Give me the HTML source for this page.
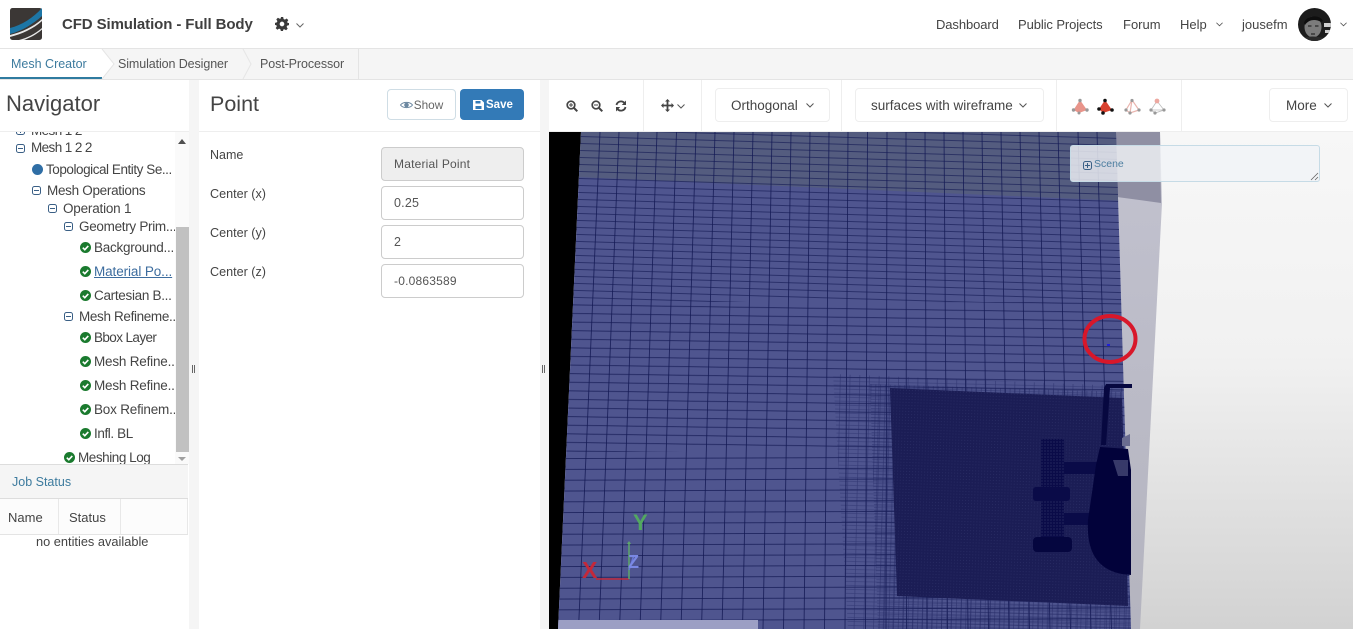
<!DOCTYPE html>
<html><head><meta charset="utf-8"><title>CFD Simulation - Full Body</title>
<style>
html,body{margin:0;padding:0;width:1353px;height:629px;overflow:hidden;background:#f5f5f5;font-family:"Liberation Sans",sans-serif;color:#444}
.a{position:absolute}
.t{position:absolute;white-space:nowrap;line-height:20px;font-size:13.5px;color:#444}
.box{position:absolute;background:#fff;box-sizing:border-box}
.inp{position:absolute;left:381px;width:143px;height:34px;box-sizing:border-box;border:1px solid #ccc;border-radius:4px;background:#fff;font-size:12px;color:#555;line-height:32px;padding-left:12px;letter-spacing:.2px}
.btn{position:absolute;box-sizing:border-box;border:1px solid #e6e6e6;border-radius:4px;background:#fff;height:34px;top:88px;font-size:13.5px;color:#444;line-height:32px;text-align:center}
.sep{position:absolute;top:80px;width:1px;height:52px;background:#eee}
svg{position:absolute;display:block;overflow:visible}
</style></head><body>

<!-- top bar -->
<div class="box" style="left:0;top:0;width:1353px;height:49px;border-bottom:1px solid #e4e4e4"></div>
<svg style="left:10px;top:8px" width="32" height="32" viewBox="0 0 32 32">
<rect width="32" height="32" rx="2.500" fill="#3b3735"/>
<path d="M0 20C12 17 23 10 32 0V8C23 16 12 23 0 26Z" fill="#1d76a6"/>
<path d="M0 27C12 24 23 19 32 11V13C23 21 12 26 0 29Z" fill="#e8e8e8"/>
<path d="M9 32C17 30 25 26 32 20V21.500C26 27 19 30 14 32Z" fill="#e8e8e8"/>
</svg>
<div class="t" style="left:62px;top:15px;font-size:15px;font-weight:bold;color:#3f3f3f;letter-spacing:-.1px">CFD Simulation - Full Body</div>
<svg style="left:275px;top:17px" width="14" height="14" viewBox="0 0 24 24"><path fill="#3a3a3a" fill-rule="evenodd" d="M10 0h4l.7 3.400 2.300 1 3-1.900 2.800 2.800-1.900 3 1 2.300L24 10v4l-3.100.7-1 2.300 1.900 3-2.800 2.800-3-1.900-2.300 1L14 24h-4l-.7-3.100-2.300-1-3 1.900-2.800-2.800 1.900-3-1-2.300L0 14v-4l3.100-.7 1-2.300-1.900-3L5 1.200l3 1.900 2.300-1zM12 8a4 4 0 1 0 0 8 4 4 0 0 0 0-8z"/></svg>
<svg style="left:296px;top:23px" width="8" height="5" viewBox="0 0 8 5"><path d="M.5.500L4 4 7.500.5" fill="none" stroke="#666"/></svg>

<div class="t" style="left:936px;top:15px;font-size:13px;letter-spacing:-.1px">Dashboard</div>
<div class="t" style="left:1018px;top:15px;font-size:13px;letter-spacing:-.1px">Public Projects</div>
<div class="t" style="left:1123px;top:15px;font-size:13px">Forum</div>
<div class="t" style="left:1180px;top:15px;font-size:13px">Help</div>
<svg style="left:1216px;top:22px" width="7" height="5" viewBox="0 0 8 5"><path d="M.5.500L4 4 7.500.5" fill="none" stroke="#555"/></svg>
<div class="t" style="left:1242px;top:15px;font-size:13px">jousefm</div>
<svg style="left:1298px;top:8px" width="33" height="33" viewBox="0 0 33 33">
<defs><clipPath id="av"><circle cx="16.500" cy="16.500" r="16.500"/></clipPath></defs>
<g clip-path="url(#av)"><rect width="33" height="33" fill="#1c1c1c"/>
<ellipse cx="15" cy="19" rx="8.500" ry="10.500" fill="#7c7c7c"/>
<path d="M6 15C8 7 22 6 25 13L23 14C18 11 11 11 7 17Z" fill="#0e0e0e"/>
<path d="M26 15h7v4h-7zM27 22h6v3h-6z" fill="#cfcfcf"/>
<path d="M5 30c5-2 14-2 20 0v3H5z" fill="#2a2a2a"/>
<path d="M10 18h3.500M17 18h3.500M13 26h4" stroke="#2a2a2a" stroke-width="1.300"/></g></svg>
<svg style="left:1340px;top:22px" width="7" height="5" viewBox="0 0 8 5"><path d="M.5.500L4 4 7.500.5" fill="none" stroke="#555"/></svg>

<!-- tabs -->
<div class="a" style="left:0;top:49px;width:1353px;height:30px;background:#f5f5f5;border-bottom:1px solid #e4e4e4"></div>
<div class="a" style="left:0;top:49px;width:102px;height:30px;background:#fff"></div>
<div class="a" style="left:0;top:77px;width:102px;height:2px;background:#2f7ba0"></div>
<svg style="left:102px;top:49px" width="260" height="30" viewBox="0 0 260 30">
<path d="M0 0L12 15 0 30" fill="#fff" stroke="#e4e4e4"/>
<path d="M141 0l8 15-8 15" fill="none" stroke="#e6e6e6"/>
<path d="M256.500 0v30" stroke="#e4e4e4"/></svg>
<div class="t" style="left:11px;top:54px;font-size:12.500px;color:#3d7b9e">Mesh Creator</div>
<div class="t" style="left:118px;top:54px;font-size:12.500px;color:#555;letter-spacing:-.1px">Simulation Designer</div>
<div class="t" style="left:260px;top:54px;font-size:12.500px;color:#555;letter-spacing:-.1px">Post-Processor</div>

<!-- navigator -->
<div class="box" style="left:0;top:80px;width:189px;height:549px"></div>
<div class="a" style="left:0;top:131px;width:189px;height:1px;background:#eee"></div>
<div class="t" style="left:6px;top:92px;font-size:22px;line-height:24px;color:#444">Navigator</div>

<div class="a" style="left:0;top:132px;width:175px;height:332px;overflow:hidden">
<div class="t" style="left:31px;top:-11px;letter-spacing:-.6px">Mesh 1 2</div>
<svg style="left:16px;top:-6px" width="9" height="9"><rect x=".5" y=".5" width="8" height="8" rx="2" fill="none" stroke="#3a5f85"/><path d="M2 4.500h5M4.500 2v5" stroke="#3a5f85"/></svg>
<div class="t" style="left:31px;top:6px;letter-spacing:-.6px">Mesh 1 2 2</div>
<div class="t" style="left:46px;top:28px;letter-spacing:-.45px">Topological Entity Se...</div>
<div class="a" style="left:32px;top:32px;width:11px;height:11px;border-radius:50%;background:#2f6ea5"></div>
<div class="t" style="left:47px;top:49px;letter-spacing:-.3px">Mesh Operations</div>
<div class="t" style="left:63px;top:67px;letter-spacing:-.2px">Operation 1</div>
<div class="t" style="left:79px;top:85px;letter-spacing:-.3px">Geometry Prim...</div>
<div class="t" style="left:94px;top:106px;letter-spacing:-.25px">Background...</div>
<div class="t" style="left:94px;top:130px;color:#3c6c9e;font-size:13.500px;letter-spacing:-.1px;text-decoration:underline">Material Po...</div>
<div class="t" style="left:94px;top:154px;letter-spacing:-.3px">Cartesian B...</div>
<div class="t" style="left:79px;top:175px;letter-spacing:-.35px">Mesh Refineme...</div>
<div class="t" style="left:94px;top:196px;letter-spacing:-.6px">Bbox Layer</div>
<div class="t" style="left:94px;top:220px;letter-spacing:-.2px">Mesh Refine..</div>
<div class="t" style="left:94px;top:244px;letter-spacing:-.2px">Mesh Refine..</div>
<div class="t" style="left:94px;top:268px;letter-spacing:-.2px">Box Refinem..</div>
<div class="t" style="left:94px;top:292px;letter-spacing:-.4px">Infl. BL</div>
<div class="t" style="left:78px;top:316px;letter-spacing:-.45px">Meshing Log</div>

<!-- minus icons -->
<svg style="left:16px;top:12px" width="9" height="9"><rect x=".5" y=".5" width="8" height="8" rx="2" fill="none" stroke="#3a5f85"/><path d="M2 4.500h5" stroke="#3a5f85"/></svg>
<svg style="left:32px;top:54px" width="9" height="9"><rect x=".5" y=".5" width="8" height="8" rx="2" fill="none" stroke="#3a5f85"/><path d="M2 4.500h5" stroke="#3a5f85"/></svg>
<svg style="left:48px;top:72px" width="9" height="9"><rect x=".5" y=".5" width="8" height="8" rx="2" fill="none" stroke="#3a5f85"/><path d="M2 4.500h5" stroke="#3a5f85"/></svg>
<svg style="left:64px;top:90px" width="9" height="9"><rect x=".5" y=".5" width="8" height="8" rx="2" fill="none" stroke="#3a5f85"/><path d="M2 4.500h5" stroke="#3a5f85"/></svg>
<svg style="left:64px;top:180px" width="9" height="9"><rect x=".5" y=".5" width="8" height="8" rx="2" fill="none" stroke="#3a5f85"/><path d="M2 4.500h5" stroke="#3a5f85"/></svg>

<!-- check icons -->
<svg style="left:80px;top:110px" width="11" height="11" viewBox="0 0 11 11"><circle cx="5.500" cy="5.500" r="5.500" fill="#1a7a2e"/><path d="M2.800 5.700l2 2 3.500-3.800" fill="none" stroke="#fff" stroke-width="1.600"/></svg>
<svg style="left:80px;top:134px" width="11" height="11" viewBox="0 0 11 11"><circle cx="5.500" cy="5.500" r="5.500" fill="#1a7a2e"/><path d="M2.800 5.700l2 2 3.500-3.800" fill="none" stroke="#fff" stroke-width="1.600"/></svg>
<svg style="left:80px;top:158px" width="11" height="11" viewBox="0 0 11 11"><circle cx="5.500" cy="5.500" r="5.500" fill="#1a7a2e"/><path d="M2.800 5.700l2 2 3.500-3.800" fill="none" stroke="#fff" stroke-width="1.600"/></svg>
<svg style="left:80px;top:200px" width="11" height="11" viewBox="0 0 11 11"><circle cx="5.500" cy="5.500" r="5.500" fill="#1a7a2e"/><path d="M2.800 5.700l2 2 3.500-3.800" fill="none" stroke="#fff" stroke-width="1.600"/></svg>
<svg style="left:80px;top:224px" width="11" height="11" viewBox="0 0 11 11"><circle cx="5.500" cy="5.500" r="5.500" fill="#1a7a2e"/><path d="M2.800 5.700l2 2 3.500-3.800" fill="none" stroke="#fff" stroke-width="1.600"/></svg>
<svg style="left:80px;top:248px" width="11" height="11" viewBox="0 0 11 11"><circle cx="5.500" cy="5.500" r="5.500" fill="#1a7a2e"/><path d="M2.800 5.700l2 2 3.500-3.800" fill="none" stroke="#fff" stroke-width="1.600"/></svg>
<svg style="left:80px;top:272px" width="11" height="11" viewBox="0 0 11 11"><circle cx="5.500" cy="5.500" r="5.500" fill="#1a7a2e"/><path d="M2.800 5.700l2 2 3.500-3.800" fill="none" stroke="#fff" stroke-width="1.600"/></svg>
<svg style="left:80px;top:296px" width="11" height="11" viewBox="0 0 11 11"><circle cx="5.500" cy="5.500" r="5.500" fill="#1a7a2e"/><path d="M2.800 5.700l2 2 3.500-3.800" fill="none" stroke="#fff" stroke-width="1.600"/></svg>
<svg style="left:64px;top:320px" width="11" height="11" viewBox="0 0 11 11"><circle cx="5.500" cy="5.500" r="5.500" fill="#1a7a2e"/><path d="M2.800 5.700l2 2 3.500-3.800" fill="none" stroke="#fff" stroke-width="1.600"/></svg>
</div>

<!-- scrollbar -->
<div class="a" style="left:175px;top:132px;width:14px;height:332px;background:#fafafa"></div>
<div class="a" style="left:176px;top:227px;width:13px;height:225px;background:#c1c1c1"></div>
<svg style="left:178px;top:139px" width="8" height="5"><path d="M0 5L4 0 8 5z" fill="#505050"/></svg>
<svg style="left:178px;top:457px" width="8" height="4"><path d="M0 0L4 4 8 0z" fill="#a0a0a0"/></svg>

<!-- job status -->
<div class="a" style="left:0;top:464px;width:188px;height:35px;background:#f5f5f5;border-top:1px solid #ddd;border-bottom:1px solid #ddd;box-sizing:border-box"></div>
<div class="t" style="left:12px;top:472px;font-size:12.500px;color:#3d7b9e">Job Status</div>
<div class="a" style="left:0;top:499px;width:188px;height:36px;background:#fcfcfc;border-bottom:1px solid #e4e4e4;box-sizing:border-box"></div>
<div class="a" style="left:58px;top:499px;width:1px;height:35px;background:#e8e8e8"></div>
<div class="a" style="left:120px;top:499px;width:1px;height:35px;background:#e8e8e8"></div>
<div class="a" style="left:187px;top:499px;width:1px;height:35px;background:#e8e8e8"></div>
<div class="t" style="left:8px;top:508px;font-size:13px">Name</div>
<div class="t" style="left:69px;top:508px;font-size:13px">Status</div>
<div class="t" style="left:36px;top:532px;font-size:12.800px">no entities available</div>

<!-- resize handles -->
<div class="a" style="left:192px;top:365px;width:1px;height:8px;background:#666;box-shadow:2px 0 0 #666"></div>
<div class="a" style="left:542px;top:365px;width:1px;height:8px;background:#666;box-shadow:2px 0 0 #666"></div>

<!-- point panel -->
<div class="box" style="left:199px;top:80px;width:341px;height:549px"></div>
<div class="a" style="left:199px;top:131px;width:341px;height:1px;background:#eee"></div>
<div class="t" style="left:210px;top:92px;font-size:21.500px;line-height:24px">Point</div>
<div class="btn" style="left:387px;top:89px;width:69px;height:31px;border-color:#cfdde5;font-size:11.800px;line-height:31px;color:#666;padding-left:14px">Show</div>
<svg style="left:400px;top:101px" width="13" height="8" viewBox="0 0 13 8"><path d="M.5 4C3 .5 10 .5 12.500 4 10 7.500 3 7.500.5 4Z" fill="none" stroke="#6b87a0"/><circle cx="6.500" cy="4" r="2.300" fill="#6b87a0"/></svg>
<div class="a" style="left:460px;top:89px;width:64px;height:31px;background:#337ab7;border-radius:4px;color:#fff;font-size:11.500px;font-weight:bold;line-height:33px;text-indent:26px">Save</div>
<svg style="left:473px;top:99px" width="11" height="11" viewBox="0 0 11 11"><path fill="#fff" fill-rule="evenodd" d="M0 1h8.500L11 3.500V11H0zM2.500 2v2.500h5V2zM2.500 7v3h6V7z"/></svg>

<div class="t" style="left:210px;top:145px;font-size:12.500px">Name</div>
<div class="t" style="left:210px;top:184px;font-size:12.600px">Center (x)</div>
<div class="t" style="left:210px;top:223px;font-size:12.600px">Center (y)</div>
<div class="t" style="left:210px;top:262px;font-size:12.600px">Center (z)</div>
<div class="inp" style="top:147px;background:#eee">Material Point</div>
<div class="inp" style="top:186px;font-size:12.500px">0.25</div>
<div class="inp" style="top:225px;font-size:12.500px">2</div>
<div class="inp" style="top:264px">-0.0863589</div>

<!-- toolbar -->
<div class="box" style="left:549px;top:80px;width:804px;height:52px"></div>
<div class="a" style="left:549px;top:131px;width:804px;height:1px;background:#eee"></div>
<div class="sep" style="left:643px"></div><div class="sep" style="left:701px"></div><div class="sep" style="left:841px"></div><div class="sep" style="left:1056px"></div><div class="sep" style="left:1181px"></div>

<svg style="left:566px;top:100px" width="12" height="12" viewBox="0 0 12 12"><circle cx="5" cy="5" r="3.800" fill="none" stroke="#444" stroke-width="1.700"/><path d="M8 8l3.300 3.300" stroke="#444" stroke-width="2"/><path d="M3 5h4M5 3v4" stroke="#444"/></svg>
<svg style="left:591px;top:100px" width="12" height="12" viewBox="0 0 12 12"><circle cx="5" cy="5" r="3.800" fill="none" stroke="#444" stroke-width="1.700"/><path d="M8 8l3.300 3.300" stroke="#444" stroke-width="2"/><path d="M3 5h4" stroke="#444"/></svg>
<svg style="left:615px;top:100px" width="12" height="12" viewBox="0 0 12 12"><path d="M1.500 5A4.600 4.600 0 0 1 9.500 3M10.500 7A4.600 4.600 0 0 1 2.500 9" fill="none" stroke="#444" stroke-width="1.800"/><path d="M11 .5V5H6.800zM1 11.500V7h4.200z" fill="#444"/></svg>
<svg style="left:661px;top:99px" width="13" height="13" viewBox="0 0 13 13"><path fill="#444" d="M6.500 0L9 2.500H7.400V5.600H10.500V4L13 6.500 10.500 9V7.400H7.400V10.500H9L6.500 13 4 10.500H5.600V7.400H2.500V9L0 6.500 2.500 4V5.600H5.600V2.500H4z"/></svg>
<svg style="left:677px;top:104px" width="8" height="5" viewBox="0 0 8 5"><path d="M.5.500L4 4 7.500.5" fill="none" stroke="#555"/></svg>

<div class="btn" style="left:715px;width:115px;top:88px;line-height:33px;font-size:13.500px;text-align:left;padding-left:15px;border-color:#eee">Orthogonal</div>
<svg style="left:806px;top:103px" width="8" height="5" viewBox="0 0 8 5"><path d="M.5.500L4 4 7.500.5" fill="none" stroke="#555"/></svg>
<div class="btn" style="left:855px;width:189px;top:88px;line-height:33px;font-size:13.500px;text-align:left;padding-left:15px;border-color:#eee">surfaces with wireframe</div>
<svg style="left:1019px;top:103px" width="8" height="5" viewBox="0 0 8 5"><path d="M.5.500L4 4 7.500.5" fill="none" stroke="#555"/></svg>

<svg style="left:1072px;top:98px" width="96" height="18" viewBox="0 0 96 18">
<path d="M8 2L15 12 7 15 1.500 12Z" fill="#e8948a"/><g fill="#999"><circle cx="8" cy="2.500" r="1.700"/><circle cx="1.500" cy="12" r="1.700"/><circle cx="15" cy="12" r="1.700"/><circle cx="7" cy="15" r="1.500"/></g>
<path d="M33 2L40 12 31 15 27 11Z" fill="#d8412e"/><g fill="#111"><circle cx="33" cy="2.500" r="1.800"/><circle cx="27" cy="11" r="1.800"/><circle cx="40" cy="12" r="1.800"/><circle cx="31" cy="15" r="1.800"/></g>
<path d="M60 2L54 12 58 15 67 12ZM60 2L58 15" fill="none" stroke="#eab5ae" stroke-width="1.200"/><g fill="#999"><circle cx="60" cy="2.500" r="1.600"/><circle cx="54" cy="12" r="1.600"/><circle cx="67" cy="12" r="1.600"/><circle cx="58" cy="15" r="1.600"/></g>
<path d="M85 3L79 12 83 15 92 12ZM79 12H92" fill="none" stroke="#bbb" stroke-width=".8"/><circle cx="85" cy="3" r="2.400" fill="#eda8a0"/><g fill="#999"><circle cx="79" cy="12" r="1.600"/><circle cx="92" cy="12" r="1.600"/><circle cx="83" cy="15" r="1.600"/></g>
</svg>

<div class="btn" style="left:1269px;width:79px;top:88px;line-height:33px;font-size:13.500px;text-align:left;padding-left:16px;border-color:#eee">More</div>
<svg style="left:1324px;top:103px" width="8" height="5" viewBox="0 0 8 5"><path d="M.5.500L4 4 7.500.5" fill="none" stroke="#555"/></svg>

<!-- viewport -->
<svg style="left:549px;top:132px" width="804" height="497" viewBox="549 132 804 497">
<defs>
<linearGradient id="bg" x1="0" y1="0" x2="0" y2="1"><stop offset="0" stop-color="#f7f7f7"/><stop offset=".45" stop-color="#f1f1f1"/><stop offset="1" stop-color="#d2d2d2"/></linearGradient>
<linearGradient id="wall" x1="0" y1="0" x2="0" y2="1"><stop offset="0" stop-color="#c2c2cf"/><stop offset="1" stop-color="#b4b4bf"/></linearGradient>
<clipPath id="mesh"><path d="M581 132H1116L1131 629H558Z"/></clipPath>
<clipPath id="z2"><path d="M833 374L1122 386 1131 629H848Z"/></clipPath>
<clipPath id="z3"><path d="M870 384L1122 392 1131 629H878Z"/></clipPath>
<clipPath id="z4"><path d="M890 388L1122 398 1128 606 897 596Z"/></clipPath>
<pattern id="r1" width="40" height="7" patternUnits="userSpaceOnUse" patternTransform="rotate(1.700 581 132)"><path d="M0 3.500H40" stroke="#141a55" stroke-width=".8" stroke-opacity=".85"/></pattern>
<pattern id="r2" width="40" height="8.600" patternUnits="userSpaceOnUse" patternTransform="rotate(.8 581 300)"><path d="M0 4H40" stroke="#141a55" stroke-width=".8" stroke-opacity=".85"/></pattern>
<pattern id="r3" width="40" height="10.800" patternUnits="userSpaceOnUse" patternTransform="rotate(-.2 581 450)"><path d="M0 5H40" stroke="#141a55" stroke-width=".8" stroke-opacity=".85"/></pattern>
<pattern id="f1" width="9.700" height="4" patternUnits="userSpaceOnUse" patternTransform="rotate(1.300)"><path d="M0 2H9.700M4.800 0V4" stroke="#1a1f5c" stroke-width=".6"/></pattern>
<pattern id="f2" width="4.800" height="3" patternUnits="userSpaceOnUse" patternTransform="rotate(1.500)"><path d="M0 1.500H4.800M2.400 0V3" stroke="#1a1f5c" stroke-width=".6"/></pattern>
<pattern id="f3" width="3" height="3" patternUnits="userSpaceOnUse" patternTransform="rotate(2)"><rect width="3" height="3" fill="#1b1d55"/><circle cx="1.500" cy="1.500" r=".45" fill="#2d3068"/></pattern>
<pattern id="f4" width="3" height="3" patternUnits="userSpaceOnUse"><rect width="3" height="3" fill="#0a0b48"/><circle cx="1" cy="1" r=".5" fill="#4a4d80"/></pattern>
</defs>
<rect x="549" y="132" width="804" height="497" fill="url(#bg)"/>
<path d="M1116 132H1160L1162 203 1140 629H1130Z" fill="url(#wall)"/>
<path d="M1116 132H1160L1161 203 1117 197Z" fill="#8f8fa3"/>
<path d="M549 132H581L558 629H549Z" fill="#000"/>
<g clip-path="url(#mesh)">
<rect x="549" y="132" width="600" height="497" fill="#4f558f"/>
<path d="M575 132H1125V201L575 177Z" fill="#545c7f"/>
<rect x="549" y="132" width="600" height="170" fill="url(#r1)"/>
<rect x="549" y="302" width="600" height="150" fill="url(#r2)"/>
<rect x="549" y="452" width="600" height="177" fill="url(#r3)"/>
<path fill="none" stroke="#141a55" stroke-width=".9" stroke-opacity=".85" d="M600 132L578.500 629M619 132L599 629M638 132L619.500 629M657 132L640 629M676.500 132L660.500 629M696 132L681 629M715 132L701.500 629M734 132L722 629M753 132L742.500 629M772 132L763 629M791 132L783.500 629M810 132L804 629M829 132L824.500 629M848 132L845 629M867.500 132L865.500 629M887 132L886 629M906 132L906.500 629M925 132L927 629M944 132L947.500 629M963 132L968 629M982 132L988.500 629M1001 132L1009 629M1020 132L1029.500 629M1039 132L1050 629M1058 132L1070.500 629M1078 132L1091 629M1097 132L1111.500 629"/>
<rect x="830" y="370" width="310" height="259" fill="url(#f1)" clip-path="url(#z2)" opacity=".55"/>
<rect x="868" y="380" width="270" height="249" fill="url(#f2)" clip-path="url(#z3)" opacity=".6"/>
<rect x="888" y="385" width="245" height="225" fill="url(#f3)" clip-path="url(#z4)"/>
<rect x="558" y="620" width="200" height="9" fill="#9c9fc4"/>
</g>
<!-- object -->
<path d="M1041 439H1064V545H1041Z" fill="url(#f4)"/>
<rect x="1033" y="487" width="37" height="14" rx="3" fill="#0a0b48"/>
<rect x="1033" y="537" width="39" height="15" rx="4" fill="#05063f"/>
<path d="M1064 462H1100V474H1064ZM1064 513H1092V525H1064Z" fill="#0a0b48"/>
<path d="M1100 447L1128 449 1131 470V575L1122 574C1100 570 1086 555 1088 520L1096 465Z" fill="#02023a"/>
<path d="M1106 384H1132V388H1110L1106 445H1101L1104 388Z" fill="#070840"/>
<path d="M1122 438L1130 434V446H1122Z" fill="#6a6c90"/>
<path d="M1113 460H1128V476H1118Z" fill="#4a4c7a" opacity=".75"/>
<!-- red ring and point -->
<ellipse cx="1110" cy="339" rx="25.500" ry="23" fill="none" stroke="#d8172a" stroke-width="4"/>
<rect x="1107" y="344" width="3" height="2" fill="#2020d8"/>
<!-- axes -->
<path d="M596 579H629" stroke="#c0283a" stroke-width="1.500"/>
<path d="M629 579V543" stroke="#5ea86a" stroke-width="1.500"/>
<path d="M631 544l-2-3-2 3z" fill="#5ea86a"/>
<path d="M629 570L634 555" stroke="#6a78d8" stroke-width="1.500"/>
<text x="582" y="578" font-family="Liberation Sans,sans-serif" font-size="23" font-weight="bold" fill="#c4283a">X</text>
<text x="633" y="530" font-family="Liberation Sans,sans-serif" font-size="22" font-weight="bold" fill="#52a860">Y</text>
<text x="628" y="568" font-family="Liberation Sans,sans-serif" font-size="18" font-weight="bold" fill="#7a88e4">Z</text>
</svg>

<!-- scene panel -->
<div class="a" style="left:1070px;top:145px;width:250px;height:37px;box-sizing:border-box;background:rgba(240,243,246,.82);border:1px solid #c6dbe6;border-radius:3px"></div>
<svg style="left:1083px;top:161px" width="9" height="9"><rect x=".5" y=".5" width="8" height="8" rx="2" fill="none" stroke="#3a5f85"/><path d="M2 4.500h5M4.500 2v5" stroke="#3a5f85"/></svg>
<div class="t" style="left:1094px;top:154px;font-size:10.500px;color:#4d7ea0">Scene</div>
<svg style="left:1310px;top:172px" width="9" height="9"><path d="M1 8L8 1M5 8L8 5" stroke="#666" stroke-width=".8"/></svg>
</body></html>
